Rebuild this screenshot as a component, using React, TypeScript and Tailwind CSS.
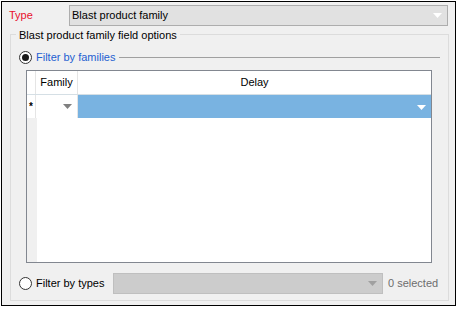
const font = { fontFamily: '"Liberation Sans", Arial, sans-serif' };

function Arrow({ color }: { color: string }) {
  return (
    <svg width="9" height="5" viewBox="0 0 9 5" className="block">
      <path d="M0 0 H9 L4.5 5 Z" fill={color} />
    </svg>
  );
}

function Radio({ checked }: { checked?: boolean }) {
  return (
    <div className="w-[13px] h-[13px] rounded-full border border-[#333333] bg-white flex items-center justify-center shrink-0">
      {checked && <div className="w-[7px] h-[7px] rounded-full bg-[#1a1a1a]" />}
    </div>
  );
}

export default function App() {
  return (
    <div className="w-[457px] h-[309px] bg-white pl-px pt-px text-[11px] leading-[15px] text-black whitespace-nowrap" style={font}>
      <div className="w-[455px] h-[305px] border border-black bg-[#f0f0f0] flex flex-col">
        {/* Type row */}
        <div className="flex items-center mt-[3px] h-[21px]">
          <div className="w-[67px] pl-[7px] text-[#e8112d]">Type</div>
          <div className="w-[379px] h-[21px] border border-[#adadad] bg-[#e1e1e1] flex items-center justify-between pl-[2px] pr-[5px]">
            <span>Blast product family</span>
            <Arrow color="#ffffff" />
          </div>
        </div>

        {/* Group box */}
        <fieldset className="ml-[8px] -mt-px w-[439px] h-[276px] border border-[#dcdcdc] flex flex-col">
          <legend className="ml-[5px] px-[3px] pt-[3px]">Blast product family field options</legend>

          <div className="flex items-center h-[16px] mt-[6px] pl-[8px] pr-[8px]">
            <Radio checked />
            <span className="ml-[4px] text-[#1f5fd0]">Filter by families</span>
            <div className="flex-1 h-px bg-[#a0a0a0] ml-[4px]" />
          </div>

          {/* Grid */}
          <div className="ml-[15px] mt-[5px] w-[406px] h-[193px] border border-[#828790] bg-white flex flex-col">
            <div className="flex h-[24px] border-b border-[#d5dfe5]">
              <div className="w-[9px] border-r border-[#e5e5e5]" />
              <div className="w-[42px] border-r border-[#e5e5e5] flex items-center justify-center">Family</div>
              <div className="flex-1 flex items-center justify-center">Delay</div>
            </div>
            <div className="flex h-[23px]">
              <div className="w-[9px] border-r border-[#e5e5e5] text-[10px] font-bold flex items-center justify-center">*</div>
              <div className="w-[42px] border-r border-[#e5e5e5] flex items-center justify-end pr-[5px]">
                <Arrow color="#808080" />
              </div>
              <div className="flex-1 bg-[#79b3e1] flex items-center justify-end pr-[5px] border-t border-[#79b3e1]">
                <Arrow color="#ffffff" />
              </div>
            </div>
            <div className="flex flex-1">
              <div className="w-[10px] bg-[#f0f0f0]" />
              <div className="flex-1 bg-white" />
            </div>
          </div>

          <div className="flex items-center h-[21px] mt-[10px] pl-[8px]">
            <Radio />
            <span className="ml-[4px] w-[77px]">Filter by types</span>
            <div className="w-[270px] h-[21px] border border-[#bfbfbf] bg-[#cccccc] flex items-center justify-end pr-[5px]">
              <Arrow color="#a0a0a0" />
            </div>
            <span className="ml-[5px] text-[#6d6d6d]">0 selected</span>
          </div>
        </fieldset>
      </div>
    </div>
  );
}
